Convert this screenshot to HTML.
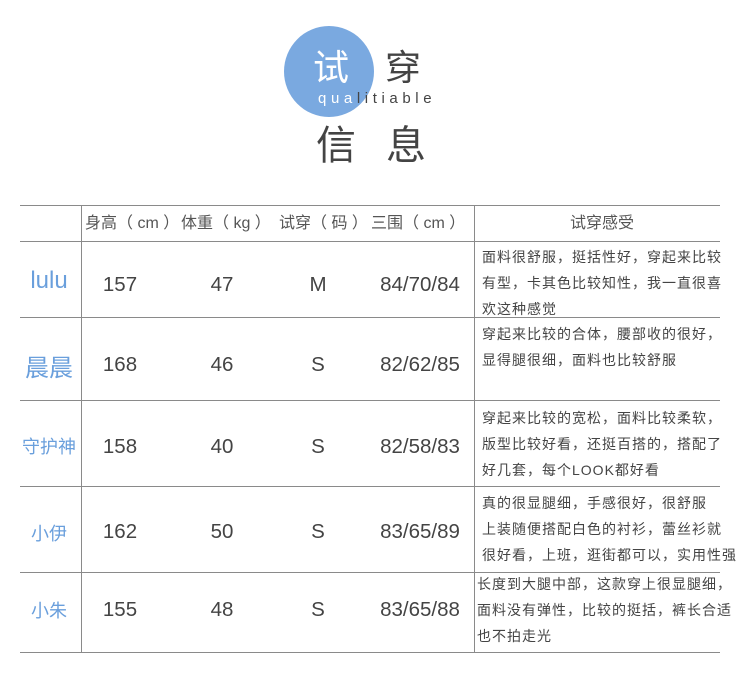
<!DOCTYPE html>
<html><head><meta charset="utf-8"><style>
*{margin:0;padding:0}
body{width:750px;height:680px;background:#fff;position:relative;overflow:hidden;font-family:"Liberation Sans","Noto Sans CJK SC",sans-serif;color:#444}
.a{position:absolute;white-space:nowrap}
.h{position:absolute;left:20px;width:700px;height:1px;background:#8a8a8a}
.v{position:absolute;width:1px;background:#8a8a8a}
.n{position:absolute;color:#6a9fdc;text-align:center;width:60px;left:19px}
.c{position:absolute;font-size:20.5px;color:#444;text-align:center}
.t{position:absolute;left:482px;font-size:14px;letter-spacing:1px;line-height:26px;color:#444;white-space:nowrap}
.hd{position:absolute;top:214px;font-size:16px;line-height:20px;color:#555;white-space:nowrap}
</style></head><body>
<div class="a" style="left:284px;top:26px;width:90px;height:91px;border-radius:50%;background:#7aa9e0"></div>
<div class="a" style="left:313px;top:48px;font-size:36px;color:#fff;line-height:40px">试</div>
<div class="a" style="left:385px;top:48px;font-size:36px;color:#444;line-height:40px">穿</div>
<div class="a" style="left:318px;top:90px;font-size:15px;letter-spacing:4.6px;color:#fff;line-height:18px">qua<span style="color:#444">litiable</span></div>
<div class="a" style="left:316px;top:123px;font-size:40px;color:#444;line-height:46px;letter-spacing:30px">信息</div>

<div class="h" style="top:205px"></div>
<div class="h" style="top:241px"></div>
<div class="h" style="top:317px"></div>
<div class="h" style="top:400px"></div>
<div class="h" style="top:486px"></div>
<div class="h" style="top:572px"></div>
<div class="h" style="top:652px"></div>
<div class="v" style="left:81px;top:205px;height:448px"></div>
<div class="v" style="left:474px;top:205px;height:448px"></div>

<div class="hd" style="left:85px">身高（ cm ）</div>
<div class="hd" style="left:181px">体重（ kg ）</div>
<div class="hd" style="left:279px">试穿（ 码 ）</div>
<div class="hd" style="left:371px">三围（ cm ）</div>
<div class="hd" style="left:570px">试穿感受</div>

<div class="n" style="top:267px;font-size:24px">lulu</div>
<div class="c" style="left:90px;width:60px;top:273px">157</div>
<div class="c" style="left:192px;width:60px;top:273px">47</div>
<div class="c" style="left:288px;width:60px;top:273px">M</div>
<div class="c" style="left:370px;width:100px;top:273px">84/70/84</div>
<div class="t" style="top:244px">面料很舒服，挺括性好，穿起来比较<br>有型，卡其色比较知性，我一直很喜<br>欢这种感觉</div>

<div class="n" style="top:348px;font-size:24px">晨晨</div>
<div class="c" style="left:90px;width:60px;top:353px">168</div>
<div class="c" style="left:192px;width:60px;top:353px">46</div>
<div class="c" style="left:288px;width:60px;top:353px">S</div>
<div class="c" style="left:370px;width:100px;top:353px">82/62/85</div>
<div class="t" style="top:321px">穿起来比较的合体，腰部收的很好，<br>显得腿很细，面料也比较舒服</div>

<div class="n" style="top:433px;font-size:18px">守护神</div>
<div class="c" style="left:90px;width:60px;top:435px">158</div>
<div class="c" style="left:192px;width:60px;top:435px">40</div>
<div class="c" style="left:288px;width:60px;top:435px">S</div>
<div class="c" style="left:370px;width:100px;top:435px">82/58/83</div>
<div class="t" style="top:405px">穿起来比较的宽松，面料比较柔软，<br>版型比较好看，还挺百搭的，搭配了<br>好几套，每个LOOK都好看</div>

<div class="n" style="top:520px;font-size:18px">小伊</div>
<div class="c" style="left:90px;width:60px;top:520px">162</div>
<div class="c" style="left:192px;width:60px;top:520px">50</div>
<div class="c" style="left:288px;width:60px;top:520px">S</div>
<div class="c" style="left:370px;width:100px;top:520px">83/65/89</div>
<div class="t" style="top:490px">真的很显腿细，手感很好，很舒服<br>上装随便搭配白色的衬衫，蕾丝衫就<br>很好看，上班，逛街都可以，实用性强</div>

<div class="n" style="top:597px;font-size:18px">小朱</div>
<div class="c" style="left:90px;width:60px;top:598px">155</div>
<div class="c" style="left:192px;width:60px;top:598px">48</div>
<div class="c" style="left:288px;width:60px;top:598px">S</div>
<div class="c" style="left:370px;width:100px;top:598px">83/65/88</div>
<div class="t" style="left:477px;top:571px">长度到大腿中部，这款穿上很显腿细，<br>面料没有弹性，比较的挺括，裤长合适<br>也不拍走光</div>
</body></html>
